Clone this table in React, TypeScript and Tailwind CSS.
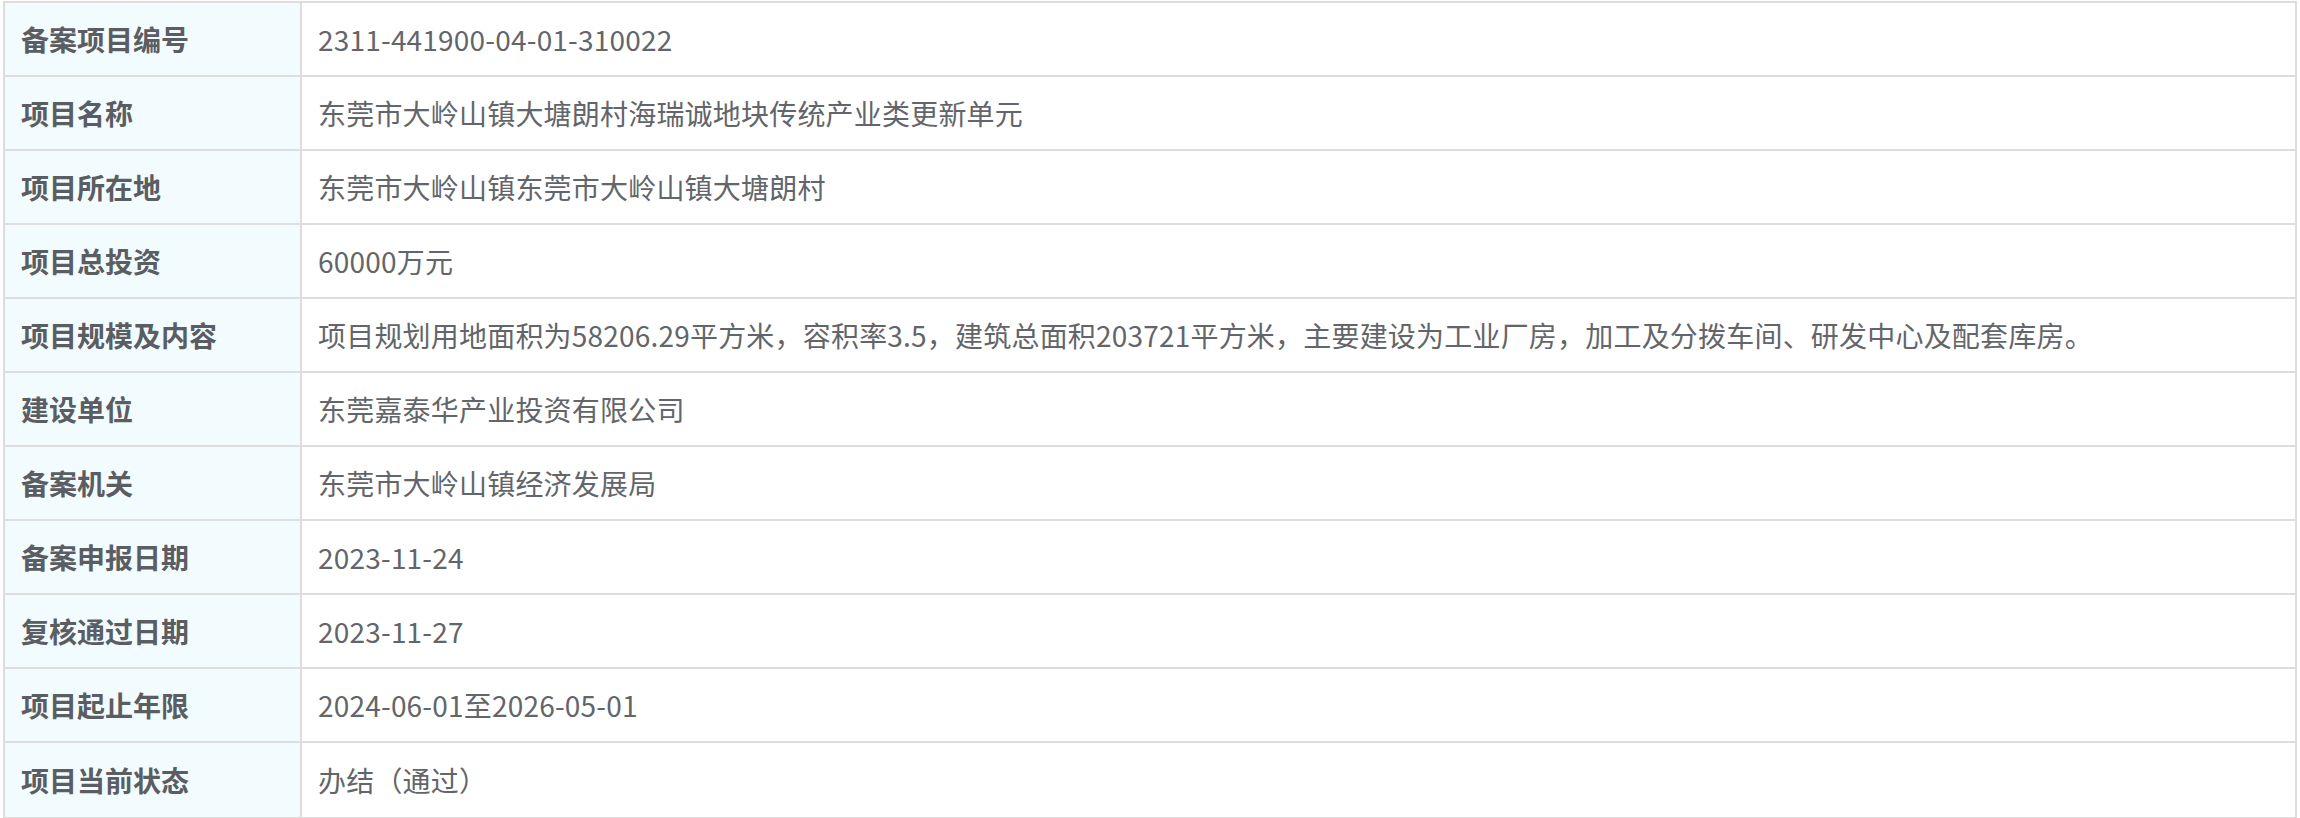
import React from "react";

const rows: [string, string][] = [
  ["备案项目编号", "2311-441900-04-01-310022"],
  ["项目名称", "东莞市大岭山镇大塘朗村海瑞诚地块传统产业类更新单元"],
  ["项目所在地", "东莞市大岭山镇东莞市大岭山镇大塘朗村"],
  ["项目总投资", "60000万元"],
  [
    "项目规模及内容",
    "项目规划用地面积为58206.29平方米，容积率3.5，建筑总面积203721平方米，主要建设为工业厂房，加工及分拨车间、研发中心及配套库房。",
  ],
  ["建设单位", "东莞嘉泰华产业投资有限公司"],
  ["备案机关", "东莞市大岭山镇经济发展局"],
  ["备案申报日期", "2023-11-24"],
  ["复核通过日期", "2023-11-27"],
  ["项目起止年限", "2024-06-01至2026-05-01"],
  ["项目当前状态", "办结（通过）"],
];

export default function App() {
  return (
    <div
      className="w-[2300px] h-[818px] bg-white pt-[1px] pl-[3px]"
      style={{ fontFamily: '"Noto Sans CJK SC", "Noto Sans", sans-serif' }}
    >
      <div className="w-[2294px] border-2 border-[#dddddd] flex flex-col">
        {rows.map(([label, value], i) => (
          <div
            key={label}
            className={`flex h-[74px] ${i < rows.length - 1 ? "border-b-2 border-[#dddddd]" : "h-[72px]"}`}
          >
            <div className="w-[297px] shrink-0 border-r-2 border-[#dddddd] bg-[#f2fbfd] flex items-center pl-[16px] text-[28px] font-bold text-[#5a5d61]">
              {label}
            </div>
            <div className="flex-1 flex items-center pl-[16px] text-[28px] tracking-[0.2px] text-[#626569]">
              {value}
            </div>
          </div>
        ))}
      </div>
    </div>
  );
}
